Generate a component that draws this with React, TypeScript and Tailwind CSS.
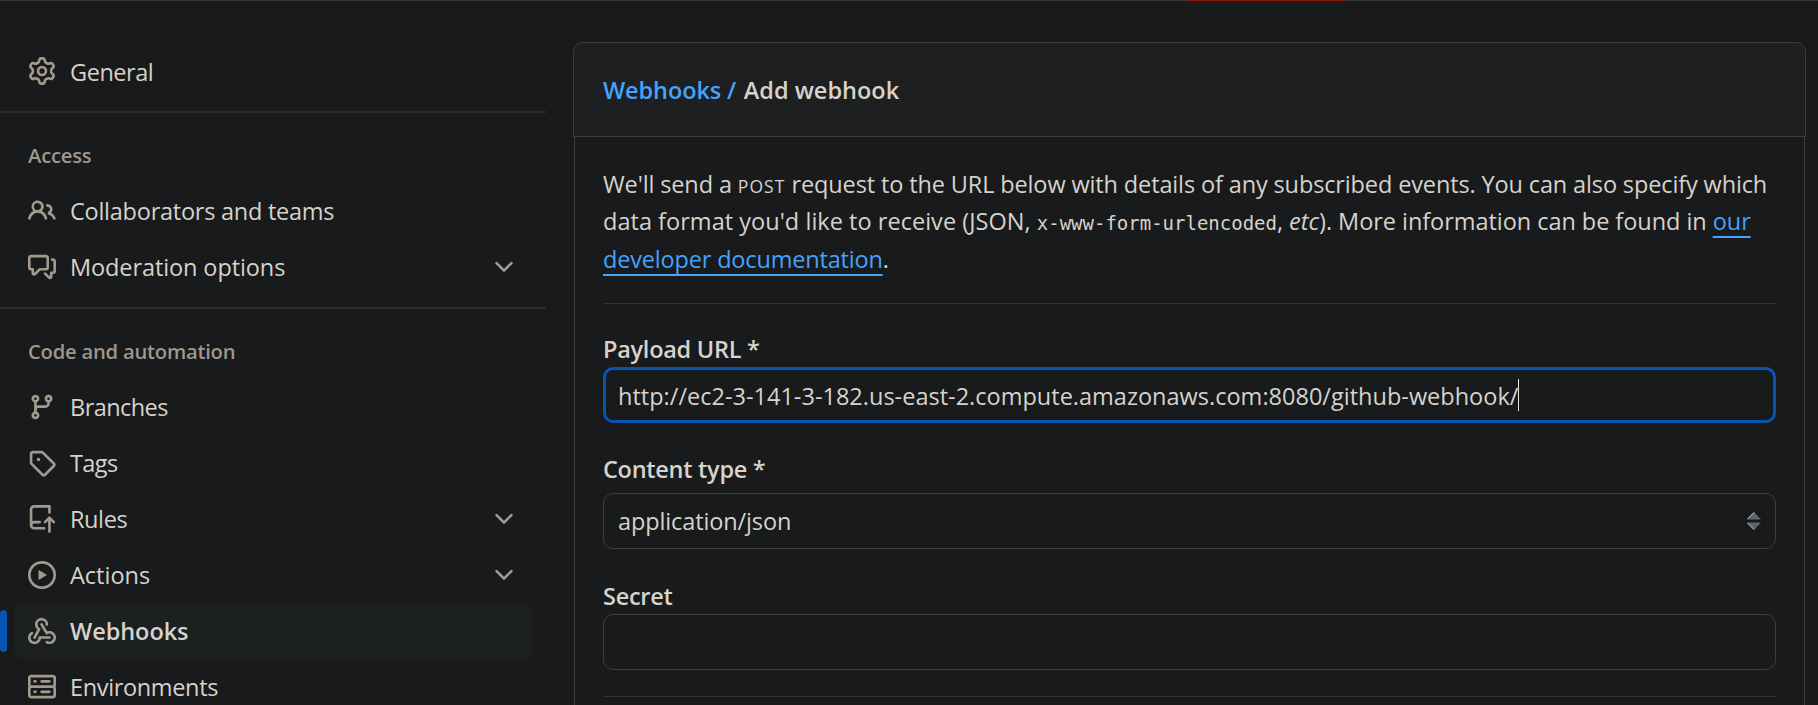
import type { ReactNode } from "react";

const icons: Record<string, string[]> = {
  gear: [
    "M8 0a8.2 8.2 0 0 1 .701.031C9.444.095 9.99.645 10.16 1.29l.288 1.107c.018.066.079.158.212.224.231.114.454.243.668.386.123.082.233.09.299.071l1.103-.303c.644-.176 1.392.021 1.82.63.27.385.506.792.704 1.218.315.675.111 1.422-.364 1.891l-.814.806c-.049.048-.098.147-.088.294.016.257.016.515 0 .772-.01.147.038.246.088.294l.814.806c.475.469.679 1.216.364 1.891a7.977 7.977 0 0 1-.704 1.217c-.428.61-1.176.807-1.82.63l-1.102-.302c-.067-.019-.177-.011-.3.071a5.909 5.909 0 0 1-.668.386c-.133.066-.194.158-.211.224l-.29 1.106c-.168.646-.715 1.196-1.458 1.26a8.006 8.006 0 0 1-1.402 0c-.743-.064-1.289-.614-1.458-1.26l-.289-1.106c-.018-.066-.079-.158-.212-.224a5.738 5.738 0 0 1-.668-.386c-.123-.082-.233-.09-.299-.071l-1.103.303c-.644.176-1.392-.021-1.82-.63a8.12 8.12 0 0 1-.704-1.218c-.315-.675-.111-1.422.363-1.891l.815-.806c.05-.048.098-.147.088-.294a6.214 6.214 0 0 1 0-.772c.01-.147-.038-.246-.088-.294l-.815-.806C.635 6.045.431 5.298.746 4.623a7.92 7.92 0 0 1 .704-1.217c.428-.61 1.176-.807 1.82-.63l1.102.302c.067.019.177.011.3-.071.214-.143.437-.272.668-.386.133-.066.194-.158.211-.224l.29-1.106C6.009.645 6.556.095 7.299.03 7.53.01 7.764 0 8 0Zm-.571 1.525c-.036.003-.108.036-.137.146l-.289 1.105c-.147.561-.549.967-.998 1.189-.173.086-.34.183-.5.29-.417.278-.97.423-1.529.27l-1.103-.303c-.109-.03-.175.016-.195.045-.22.312-.412.644-.573.99-.014.031-.021.11.059.19l.815.806c.411.406.562.957.53 1.456a4.709 4.709 0 0 0 0 .582c.032.499-.119 1.05-.53 1.456l-.815.806c-.081.08-.073.159-.059.19.162.346.353.677.573.989.02.03.085.076.195.046l1.102-.303c.56-.153 1.113-.008 1.53.27.161.107.328.204.501.29.447.222.85.629.997 1.189l.289 1.105c.029.109.101.143.137.146a6.6 6.6 0 0 0 1.142 0c.036-.003.108-.036.137-.146l.289-1.105c.147-.561.549-.967.998-1.189.173-.086.34-.183.5-.29.417-.278.97-.423 1.529-.27l1.103.303c.109.029.175-.016.195-.045.22-.313.411-.644.573-.99.014-.031.021-.11-.059-.19l-.815-.806c-.411-.406-.562-.957-.53-1.456a4.709 4.709 0 0 0 0-.582c-.032-.499.119-1.05.53-1.456l.815-.806c.081-.08.073-.159.059-.19a6.464 6.464 0 0 0-.573-.989c-.02-.03-.085-.076-.195-.046l-1.102.303c-.56.153-1.113.008-1.53-.27a4.44 4.44 0 0 0-.501-.29c-.447-.222-.85-.629-.997-1.189l-.289-1.105c-.029-.11-.101-.143-.137-.146a6.6 6.6 0 0 0-1.142 0ZM11 8a3 3 0 1 1-6 0 3 3 0 0 1 6 0ZM9.5 8a1.5 1.5 0 1 0-3.001.001A1.5 1.5 0 0 0 9.5 8Z",
  ],
  people: [
    "M2 5.5a3.5 3.5 0 1 1 5.898 2.549 5.508 5.508 0 0 1 3.034 4.084.75.75 0 1 1-1.482.235 4 4 0 0 0-7.9 0 .75.75 0 0 1-1.482-.236A5.507 5.507 0 0 1 3.102 8.05 3.493 3.493 0 0 1 2 5.5ZM11 4a3.001 3.001 0 0 1 2.22 5.018 5.01 5.01 0 0 1 2.56 3.012.749.749 0 0 1-.885.954.752.752 0 0 1-.549-.514 3.507 3.507 0 0 0-2.522-2.372.75.75 0 0 1-.574-.73v-.352a.75.75 0 0 1 .416-.672A1.5 1.5 0 0 0 11 5.5.75.75 0 0 1 11 4Zm-5.5-.5a2 2 0 1 0-.001 3.999A2 2 0 0 0 5.5 3.5Z",
  ],
  discussion: [
    "M1.75 1h8.5c.966 0 1.75.784 1.75 1.75v5.5A1.75 1.75 0 0 1 10.25 10H7.061l-2.574 2.573A1.458 1.458 0 0 1 2 11.543V10h-.25A1.75 1.75 0 0 1 0 8.25v-5.5C0 1.784.784 1 1.75 1ZM1.5 2.75v5.5c0 .138.112.25.25.25h1a.75.75 0 0 1 .75.75v2.19l2.72-2.72a.749.749 0 0 1 .53-.22h3.5a.25.25 0 0 0 .25-.25v-5.5a.25.25 0 0 0-.25-.25h-8.5a.25.25 0 0 0-.25.25Zm13 2a.25.25 0 0 0-.25-.25h-.5a.75.75 0 0 1 0-1.5h.5c.966 0 1.75.784 1.75 1.75v5.5A1.75 1.75 0 0 1 14.25 12H14v1.543a1.458 1.458 0 0 1-2.487 1.03L9.22 12.28a.749.749 0 0 1 .326-1.275.749.749 0 0 1 .734.215l2.22 2.22v-2.19a.75.75 0 0 1 .75-.75h1a.25.25 0 0 0 .25-.25Z",
  ],
  branch: [
    "M9.5 3.25a2.25 2.25 0 1 1 3 2.122V6A2.5 2.5 0 0 1 10 8.5H6a1 1 0 0 0-1 1v1.128a2.251 2.251 0 1 1-1.5 0V5.372a2.25 2.25 0 1 1 1.5 0v1.836A2.493 2.493 0 0 1 6 7h4a1 1 0 0 0 1-1v-.628A2.25 2.25 0 0 1 9.5 3.25Zm-6 0a.75.75 0 1 0 1.5 0 .75.75 0 0 0-1.5 0Zm8.25-.75a.75.75 0 1 0 0 1.5.75.75 0 0 0 0-1.5ZM4.25 12a.75.75 0 1 0 0 1.5.75.75 0 0 0 0-1.5Z",
  ],
  tag: [
    "M1 7.775V2.75C1 1.784 1.784 1 2.75 1h5.025c.464 0 .91.184 1.238.513l6.25 6.25a1.75 1.75 0 0 1 0 2.474l-5.026 5.026a1.75 1.75 0 0 1-2.474 0l-6.25-6.25A1.752 1.752 0 0 1 1 7.775Zm1.5 0c0 .066.026.13.073.177l6.25 6.25a.25.25 0 0 0 .354 0l5.025-5.025a.25.25 0 0 0 0-.354l-6.25-6.25a.25.25 0 0 0-.177-.073H2.75a.25.25 0 0 0-.25.25ZM6 5a1 1 0 1 1 0 2 1 1 0 0 1 0-2Z",
  ],
  rules: [
    "M1 2.5A2.5 2.5 0 0 1 3.5 0h8.75a.75.75 0 0 1 .75.75v3.5a.75.75 0 0 1-1.5 0V1.5h-8a1 1 0 0 0-1 1v6.708A2.493 2.493 0 0 1 3.5 9h3.25a.75.75 0 0 1 0 1.5H3.5a1 1 0 0 0 0 2h5.75a.75.75 0 0 1 0 1.5H3.5A2.5 2.5 0 0 1 1 11.5Zm13.23 7.79h-.001l-1.224-1.224v6.184a.75.75 0 0 1-1.5 0V9.066L10.28 10.29a.75.75 0 0 1-1.06-1.061l2.505-2.504a.75.75 0 0 1 1.06 0L15.29 9.23a.751.751 0 0 1-.018 1.042.751.751 0 0 1-1.042.018Z",
  ],
  play: [
    "M8 0a8 8 0 1 1 0 16A8 8 0 0 1 8 0ZM1.5 8a6.5 6.5 0 1 0 13 0 6.5 6.5 0 0 0-13 0Zm4.879-2.773 4.264 2.559a.25.25 0 0 1 0 .428l-4.264 2.559A.25.25 0 0 1 6 10.559V5.442a.25.25 0 0 1 .379-.215Z",
  ],
  webhook: [
    "M5.5 4.25a2.25 2.25 0 0 1 4.5 0 .75.75 0 0 0 1.5 0 3.75 3.75 0 1 0-6.14 2.889l-2.272 4.258a.75.75 0 0 0 1.324.706L7 7.25a.75.75 0 0 0-.309-1.015A2.25 2.25 0 0 1 5.5 4.25Z",
    "M7.364 3.607a.75.75 0 0 1 1.03.257l2.608 4.349a3.75 3.75 0 1 1-.628 6.785.75.75 0 0 1 .752-1.299 2.25 2.25 0 1 0-.033-3.88.75.75 0 0 1-1.03-.256L7.107 4.636a.75.75 0 0 1 .257-1.03Z",
    "M2.9 8.776A.75.75 0 0 1 2.625 9.8 2.25 2.25 0 1 0 6 11.75a.75.75 0 0 1 .75-.751h5.5a.75.75 0 0 1 0 1.5H7.425a3.751 3.751 0 1 1-5.55-3.998.75.75 0 0 1 1.024.274Z",
  ],
  server: [
    "M1.75 1h12.5c.966 0 1.75.784 1.75 1.75v4c0 .372-.116.717-.314 1 .198.283.314.628.314 1v4a1.75 1.75 0 0 1-1.75 1.75H1.75A1.75 1.75 0 0 1 0 12.75v-4c0-.358.109-.707.314-1a1.739 1.739 0 0 1-.314-1v-4C0 1.784.784 1 1.75 1ZM1.5 2.75v4c0 .138.112.25.25.25h12.5a.25.25 0 0 0 .25-.25v-4a.25.25 0 0 0-.25-.25H1.75a.25.25 0 0 0-.25.25Zm.25 5.75a.25.25 0 0 0-.25.25v4c0 .138.112.25.25.25h12.5a.25.25 0 0 0 .25-.25v-4a.25.25 0 0 0-.25-.25ZM7 4.75A.75.75 0 0 1 7.75 4h4.5a.75.75 0 0 1 0 1.5h-4.5A.75.75 0 0 1 7 4.75ZM7.75 10h4.5a.75.75 0 0 1 0 1.5h-4.5a.75.75 0 0 1 0-1.5ZM3 4.75A.75.75 0 0 1 3.75 4h.5a.75.75 0 0 1 0 1.5h-.5A.75.75 0 0 1 3 4.75ZM3.75 10h.5a.75.75 0 0 1 0 1.5h-.5a.75.75 0 0 1 0-1.5Z",
  ],
  chevron: [
    "M12.78 5.22a.749.749 0 0 1 0 1.06l-4.25 4.25a.749.749 0 0 1-1.06 0L3.22 6.28a.749.749 0 1 1 1.06-1.06L8 8.939l3.72-3.719a.749.749 0 0 1 1.06 0Z",
  ],
};

function Icon({ name }: { name: string }) {
  return (
    <svg viewBox="0 0 16 16" className="size-7 shrink-0 fill-[#a29a8e]" aria-hidden="true">
      {icons[name].map((d) => (
        <path key={d} d={d} />
      ))}
    </svg>
  );
}

type ItemProps = { icon: string; label: string; tracking: string; expandable?: boolean; active?: boolean };

function NavItem({ icon, label, tracking, expandable, active }: ItemProps) {
  return (
    <li className="flex items-center">
      <span className={`h-[42px] w-[7px] rounded-[4px] ${active ? "bg-[#0755b3]" : ""}`} />
      <a
        href="#"
        className={`ml-[7px] flex h-14 w-[518px] items-center rounded-[10px] px-3.5 ${active ? "bg-[#1c2021] font-semibold" : ""}`}
      >
        <Icon name={icon} />
        <span className={`ml-3.5 leading-[56px] whitespace-nowrap ${tracking}`}>{label}</span>
        {expandable && (
          <span className="ml-auto">
            <Icon name="chevron" />
          </span>
        )}
      </a>
    </li>
  );
}

function NavGroup({ title, children }: { title: string; children: ReactNode }) {
  return (
    <section className="mt-3 border-t-2 border-[#292c2d]">
      <h3 className="h-[70px] pt-[7px] pl-7 text-[20.2px] leading-[71px] font-semibold tracking-[-0.22px] text-[#9f978b]">
        {title}
      </h3>
      <ul>{children}</ul>
    </section>
  );
}

function DocLink({ children }: { children: ReactNode }) {
  return (
    <a
      href="#"
      className="text-[#45a3fb] underline decoration-2 underline-offset-[6px] [text-decoration-skip-ink:none]"
    >
      {children}
    </a>
  );
}

export default function App() {
  return (
    <div className="h-[705px] overflow-hidden bg-[#181a1b] font-['Open_Sans','Noto_Sans',sans-serif] text-[23.5px] text-[#d6d2cc]">
      <div className="flex h-px bg-[#323638]">
        <div className="ml-[1187px] w-[159px] bg-[#8c1b05]" />
      </div>
      <div className="flex">
        <nav className="w-[546px] shrink-0 pt-[42px]">
          <ul>
            <NavItem icon="gear" label="General" tracking="tracking-[-0.45px] pt-px" />
          </ul>
          <NavGroup title="Access">
            <NavItem icon="people" label="Collaborators and teams" tracking="tracking-[-0.25px]" />
            <NavItem icon="discussion" label="Moderation options" tracking="tracking-[-0.1px]" expandable />
          </NavGroup>
          <NavGroup title="Code and automation">
            <NavItem icon="branch" label="Branches" tracking="tracking-[-0.55px]" />
            <NavItem icon="tag" label="Tags" tracking="tracking-[-0.6px]" />
            <NavItem icon="rules" label="Rules" tracking="tracking-[-0.4px]" expandable />
            <NavItem icon="play" label="Actions" tracking="tracking-normal" expandable />
            <NavItem icon="webhook" label="Webhooks" tracking="tracking-[-0.05px]" active />
            <NavItem icon="server" label="Environments" tracking="tracking-[-0.35px]" />
          </NavGroup>
        </nav>

        <main className="mt-[41px] ml-[27px] w-[1233px]">
          <h2 className="h-[95px] rounded-t-[10px] border border-[#3a3e40] bg-[#1d1f20] pt-[29px] pl-[29px] leading-9 font-semibold">
            <a href="#" className="tracking-[-0.1px] text-[#45a3fb]">Webhooks /</a>{" "}
            <span className="ml-[1.5px]">Add webhook</span>
          </h2>
          <div className="mx-px h-[640px] border-x border-[#3a3e40] px-7 pt-[29px]">
            <div className="h-28 leading-[37.4px] whitespace-nowrap">
              <div className="tracking-[-0.13px]">
                We'll send a <span className="text-[17.5px] leading-none font-medium tracking-[1.1px]">POST</span>{" "}
                request to the URL below with details of any subscribed events. You can also specify which
              </div>
              <div className="tracking-[-0.05px]">
                <span className="tracking-[0.03px]">data format you'd like to receive (JSON, </span>
                <code className="font-['DejaVu_Sans_Mono',monospace] text-[19px] leading-none tracking-normal">
                  x-www-form-urlencoded
                </code>
                , <em>etc</em>). More information can be found in <DocLink>our</DocLink>
              </div>
              <div className="tracking-[-0.17px]">
                <DocLink>developer documentation</DocLink>.
              </div>
            </div>
            <form className="mt-[25px] border-t border-[#2f3335] pt-[27px]">
              <label className="block leading-9 font-semibold tracking-[-0.27px]">Payload URL *</label>
              <div className="flex h-14 items-center rounded-[10px] border-3 border-[#0755b3] pl-3">
                <span className="pt-px leading-[50px] tracking-[0.01px] whitespace-nowrap">
                  http://ec2-3-141-3-182.us-east-2.compute.amazonaws.com:8080/github-webhook/
                </span>
                <span className="h-8 w-px bg-[#e8e6e3]" />
              </div>
              <label className="mt-7 block leading-9 font-semibold tracking-[-0.28px]">Content type *</label>
              <div className="mt-1.5 flex h-14 items-center justify-between rounded-[10px] border border-[#3a3e40] px-3.5">
                <span className="leading-[54px] tracking-[-0.12px]">application/json</span>
                <svg viewBox="0 0 14 18" className="h-[18px] w-3.5">
                  <path d="M7 0 14 7.5H0ZM0 10.5H14L7 18Z" fill="#5d6668" />
                  <path d="M7 .5.5 7M.5 11 7 17.5" fill="none" stroke="#c8c4bd" />
                </svg>
              </div>
              <label className="mt-[29px] block leading-9 font-semibold tracking-[-0.28px]">Secret</label>
              <div className="h-14 rounded-[10px] border border-[#3a3e40]" />
              <hr className="mt-[26px] border-[#2f3335]" />
            </form>
          </div>
        </main>
      </div>
    </div>
  );
}
